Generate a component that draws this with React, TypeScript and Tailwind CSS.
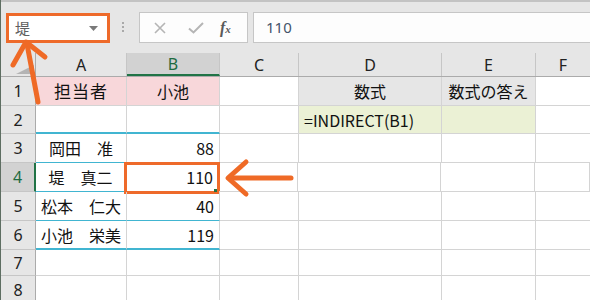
import React from "react"

const cols = [35, 91, 93, 79, 143, 94, 55]
const rowHeights = [29, 28, 29, 29, 29, 29, 26, 28]

type Cell = {
  text?: string
  align?: "left" | "center" | "right"
  cls?: string
}

// sheet contents, row by row (columns A..F)
const sheet: Cell[][] = [
  [
    { text: "担当者", align: "center", cls: "bg-[#f8d7da] text-[17px] tracking-[1px]" },
    { text: "小池", align: "center", cls: "bg-[#f8d7da]" },
    {},
    { text: "数式", align: "center", cls: "bg-[#e6e6e6]" },
    { text: "数式の答え", align: "center", cls: "bg-[#e6e6e6]" },
    {},
  ],
  [
    { cls: "border-b-2 border-b-[#41b5d1]" },
    { cls: "border-b-2 border-b-[#41b5d1]" },
    {},
    { text: "=INDIRECT(B1)", align: "left", cls: "bg-[#ebf1d5]" },
    { cls: "bg-[#ebf1d5]" },
    {},
  ],
  [
    { text: "岡田　准", align: "center", cls: "border-b-[#41b5d1]" },
    { text: "88", align: "right", cls: "border-b-[#41b5d1]" },
    {}, {}, {}, {},
  ],
  [
    { text: "堤　真二", align: "center", cls: "border-b-[#41b5d1] border-l border-l-[#217346] -ml-px" },
    { text: "110", align: "right", cls: "border-b-[#41b5d1]" },
    {}, {}, {}, {},
  ],
  [
    { text: "松本　仁大", align: "center", cls: "border-b-[#41b5d1]" },
    { text: "40", align: "right", cls: "border-b-[#41b5d1]" },
    {}, {}, {}, {},
  ],
  [
    { text: "小池　栄美", align: "center", cls: "border-b-2 border-b-[#41b5d1]" },
    { text: "119", align: "right", cls: "border-b-2 border-b-[#41b5d1]" },
    {}, {}, {}, {},
  ],
  [{}, {}, {}, {}, {}, {}],
  [{}, {}, {}, {}, {}, {}],
]

const alignCls = {
  left: "justify-start pl-[5px]",
  center: "justify-center",
  right: "justify-end pr-[5px]",
}

function Toolbar() {
  return (
    <div className="h-[53px] bg-[#e6e6e6] border-t-2 border-[#c3c3c3] flex items-start pt-[11px]">
      {/* name box */}
      <div className="ml-[5px] w-[104px] h-[30px] border-[3px] border-[#ee6a2a] bg-white flex items-center justify-between pl-[6px] pr-[9px]">
        <span className="text-[15px] text-[#5f5f5f]">堤</span>
        <svg width="9" height="5" viewBox="0 0 9 5">
          <path d="M0 0h9L4.5 5z" fill="#7a7a7a" />
        </svg>
      </div>
      <div className="ml-[12px] mt-[9px] flex flex-col gap-[2px]">
        <div className="w-[2px] h-[2px] bg-[#a9a9a9]" />
        <div className="w-[2px] h-[2px] bg-[#a9a9a9]" />
        <div className="w-[2px] h-[2px] bg-[#a9a9a9]" />
      </div>
      {/* cancel / enter / insert function */}
      <div className="ml-[15px] -mt-px w-[109px] h-[31px] bg-[#fdfdfd] border border-[#c6c6c6] flex items-center pl-[13px]">
        <svg width="12" height="12" viewBox="0 0 12 12" className="ml-px">
          <path d="M1 1l10 10M11 1L1 11" stroke="#b5b5b5" strokeWidth="1.6" />
        </svg>
        <svg width="16" height="12" viewBox="0 0 16 12" className="ml-[22px]">
          <path d="M1 6.5l4.5 4L15 1" stroke="#b5b5b5" strokeWidth="2" fill="none" />
        </svg>
        <span className="ml-[16px] italic font-semibold text-[16px] text-[#5a5a5a] font-['Liberation_Serif',serif] leading-none">
          f<span className="text-[11px]">x</span>
        </span>
      </div>
      <div className="ml-[5px] -mt-px flex-1 h-[31px] bg-[#fdfdfd] border border-r-0 border-[#c6c6c6] flex items-center pl-[12px]">
        <span className="text-[15px] text-[#44546a] font-['Noto_Sans',sans-serif]">110</span>
      </div>
    </div>
  )
}

function ColumnHeaders() {
  const letters = ["A", "B", "C", "D", "E", "F"]
  return (
    <div className="flex h-[24px] bg-[#e6e6e6] border-b border-[#ababab]">
      <div className="w-[35px] shrink-0 border-r border-[#ababab] relative">
        <svg width="18" height="9" viewBox="0 0 18 9" className="absolute left-[15px] top-[12px]">
          <path d="M18 0v9H0z" fill="#b4b4b4" />
        </svg>
      </div>
      {letters.map((l, i) => (
        <div
          key={l}
          style={{ width: cols[i + 1] }}
          className={
            "shrink-0 flex items-center justify-center text-[16px] border-r border-[#c6c6c6] font-['Noto_Sans',sans-serif] " +
            (l === "B" ? "bg-[#d2d2d2] text-[#1e6b41] border-b-2 border-b-[#217346]" : "text-[#222]")
          }
        >
          {l}
        </div>
      ))}
    </div>
  )
}

export default function App() {
  return (
    <div className="w-[590px] h-[300px] overflow-hidden relative bg-white border-l border-[#5e6e62] font-['Noto_Sans_CJK_JP',sans-serif]">
      <Toolbar />
      <ColumnHeaders />

      {sheet.map((row, r) => (
        <div key={r} className="flex" style={{ height: rowHeights[r] }}>
          <div
            className={
              "w-[35px] shrink-0 flex items-center justify-center text-[16px] border-b border-[#c6c6c6] font-['Noto_Sans',sans-serif] " +
              (r === 3
                ? "bg-[#d2d2d2] text-[#1e6b41] border-r-2 border-r-[#217346]"
                : "bg-[#e6e6e6] text-[#222] border-r border-r-[#ababab]")
            }
          >
            {r + 1}
          </div>
          {row.map((c, i) => (
            <div
              key={i}
              style={{ width: cols[i + 1] }}
              className={
                "shrink-0 relative flex items-center text-[16px] text-[#111] border-r border-b border-[#d4d4d4] " +
                alignCls[c.align ?? "left"] +
                " " +
                (c.cls ?? "")
              }
            >
              {c.text}
              {r === 3 && i === 1 && (
                <>
                  <div className="absolute left-[-2px] top-[-1px] w-[96px] h-[32px] border-[3px] border-[#ee6a2a]" />
                  <div className="absolute right-[1px] bottom-[-1px] w-[3px] h-[3px] bg-[#217346]" />
                </>
              )}
            </div>
          ))}
        </div>
      ))}

      {/* annotation arrows */}
      <svg className="absolute left-0 top-0 pointer-events-none" width="590" height="300">
        <g stroke="#ef6a26" strokeWidth="5" fill="none" strokeLinecap="round" strokeLinejoin="round">
          <path d="M37 102L26 44" />
          <path d="M12 65L25 42L44 57" />
          <path d="M290 178H229" />
          <path d="M245 162L227 178L245 194" />
        </g>
      </svg>
    </div>
  )
}
